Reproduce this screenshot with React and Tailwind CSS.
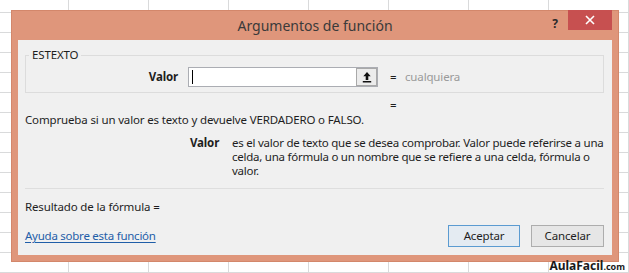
export default function App() {
  const font = { fontFamily: '"Noto Sans", "Open Sans", "Liberation Sans", sans-serif' };
  return (
    <div
      className="relative w-[629px] h-[273px] overflow-hidden bg-white pt-[10px] pl-[11px] [background-image:linear-gradient(to_right,#d9dadb_1px,transparent_1px),linear-gradient(to_bottom,#d9dadb_1px,transparent_1px)] [background-size:80px_20px] [background-position:68px_12px]"
      style={font}
    >
      <div className="w-[608px] h-[252px] bg-[#df967b] border border-[#d3876b] flex flex-col">
        {/* Title bar */}
        <div className="relative h-[29px] flex items-start pr-[6px]">
          <div className="absolute inset-x-0 top-[5px] text-center text-[14px] leading-[20px] text-[#3a3a3a]">
            Argumentos de función
          </div>
          <div className="flex-1" />
          <div className="relative mt-[6px] mr-[10px] text-[12px] leading-[14px] font-bold text-[#2a2a2a]">?</div>
          <div className="relative w-[44px] h-[20px] -mt-[1px] bg-[#c75050] flex items-center justify-center">
            <svg width="10" height="10" viewBox="0 0 10 10">
              <path d="M1 1 L9 9 M9 1 L1 9" stroke="#ffffff" strokeWidth="1.6" />
            </svg>
          </div>
        </div>
        {/* Inner panel */}
        <div className="mx-[6px] mb-[6px] flex-1 bg-[#f0f0f0] pl-[7px] pr-[8px] flex flex-col text-[11.5px] leading-[14px] text-[#1e1e1e] tracking-[-0.15px]">
          {/* group box */}
          <div className="relative mt-[15px] h-[38px] border border-[#dcdcdc] flex items-start pt-[11px]">
            <span className="absolute -top-[8px] left-[3px] px-[3px] bg-[#f0f0f0] leading-[14px]">
              ESTEXTO
            </span>
            <div className="w-[152px] text-right font-bold leading-[20px]">Valor</div>
            <div className="ml-[10px] w-[190px] h-[20px] bg-white border border-[#abadb3] flex">
              <div className="flex-1 flex items-center pl-[3px]">
                <div className="w-px h-[14px] bg-black" />
              </div>
              <div className="w-[21px] h-[18px] bg-[#ececec] border border-[#a9a9a9] flex items-center justify-center">
                <svg width="10" height="12" viewBox="0 0 10 12">
                  <path d="M5 1 L1.3 5.3 L3.7 5.3 L3.7 9 L6.3 9 L6.3 5.3 L8.7 5.3 Z" fill="#111" />
                  <rect x="0.8" y="10" width="8.4" height="1.5" fill="#111" />
                </svg>
              </div>
            </div>
            <span className="ml-[12px] w-[15px] leading-[20px]">=</span>
            <span className="leading-[20px] text-[#9a9a9a]">cualquiera</span>
          </div>
          <div className="mt-[5px] pl-[365px]">=</div>
          <div className="mt-[1px] whitespace-nowrap">Comprueba si un valor es texto y devuelve VERDADERO o FALSO.</div>
          <div className="mt-[9px] flex pl-[165px]">
            <span className="w-[42px] shrink-0 font-bold">Valor</span>
            <span className="whitespace-nowrap tracking-[-0.25px]">
              es el valor de texto que se desea comprobar. Valor puede referirse a una
              <br />
              celda, una fórmula o un nombre que se refiere a una celda, fórmula o
              <br />
              valor.
            </span>
          </div>
          <div className="mt-[10px] border-t border-[#dedede]" />
          <div className="mt-[11px]">Resultado de la fórmula =</div>
          <div className="mt-[11px] h-[22px] flex items-center">
            <a className="text-[#1f5ea8] underline underline-offset-2 cursor-pointer tracking-[-0.25px]">Ayuda sobre esta función</a>
            <div className="flex-1" />
            <button className="w-[72px] h-[22px] border border-[#5b9bd1] bg-[#e4ebf2] text-[11.5px] text-[#1e1e1e]">
              Aceptar
            </button>
            <button className="ml-[11px] w-[73px] h-[22px] border border-[#adadad] bg-[#e6e6e6] text-[11.5px] text-[#1e1e1e]">
              Cancelar
            </button>
          </div>
        </div>
      </div>
      <div className="absolute right-[4px] bottom-[0px] flex items-baseline font-bold text-[#1a1a1a] leading-[12px]">
        <span className="text-[12px]">AulaFacil</span>
        <span className="text-[9px]">.com</span>
      </div>
    </div>
  );
}
